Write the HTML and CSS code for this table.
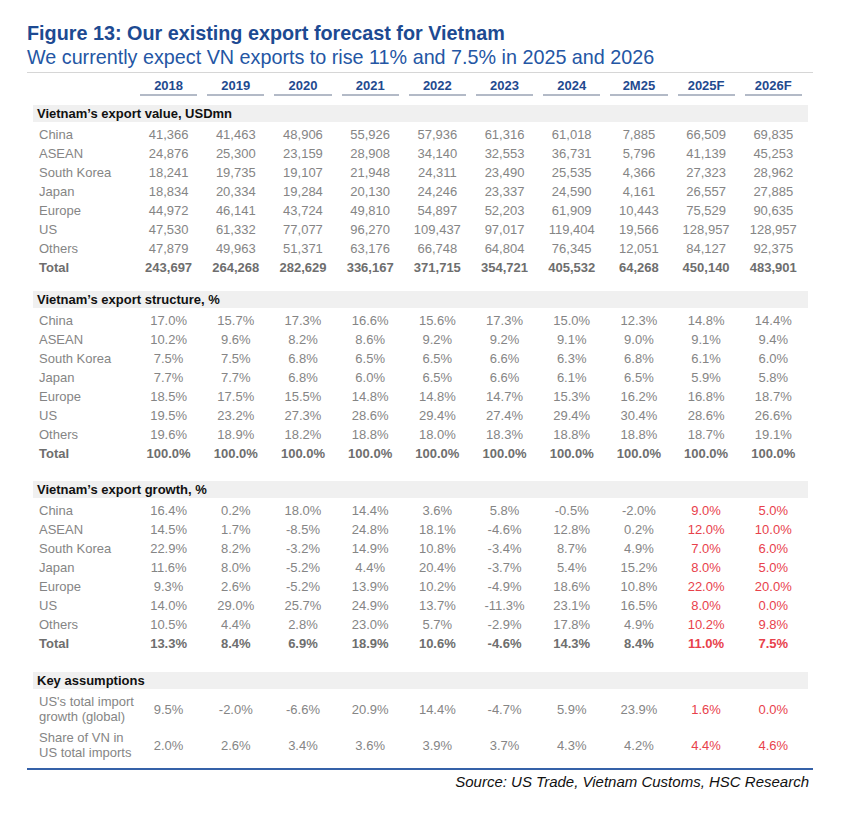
FILE: index.html
```html
<!DOCTYPE html>
<html>
<head>
<meta charset="utf-8">
<title>Figure 13</title>
<link rel="stylesheet" href="styles.css">
</head>
<body>
<div class="figure">
  <h1 class="title">Figure 13: Our existing export forecast for Vietnam</h1>
  <p class="subtitle">We currently expect VN exports to rise 11% and 7.5% in 2025 and 2026</p>
  <div class="rule"></div>
  <div class="table">
    <div class="row head">
      <div></div>
      <div class="yr"><span>2018</span></div>
      <div class="yr"><span>2019</span></div>
      <div class="yr"><span>2020</span></div>
      <div class="yr"><span>2021</span></div>
      <div class="yr"><span>2022</span></div>
      <div class="yr"><span>2023</span></div>
      <div class="yr"><span>2024</span></div>
      <div class="yr"><span>2M25</span></div>
      <div class="yr"><span>2025F</span></div>
      <div class="yr"><span>2026F</span></div>
    </div>

    <div class="section s1">
      <div class="band">Vietnam’s export value, USDmn</div>
      <div class="row"><div class="lbl">China</div><div>41,366</div><div>41,463</div><div>48,906</div><div>55,926</div><div>57,936</div><div>61,316</div><div>61,018</div><div>7,885</div><div>66,509</div><div>69,835</div></div>
      <div class="row"><div class="lbl">ASEAN</div><div>24,876</div><div>25,300</div><div>23,159</div><div>28,908</div><div>34,140</div><div>32,553</div><div>36,731</div><div>5,796</div><div>41,139</div><div>45,253</div></div>
      <div class="row"><div class="lbl">South Korea</div><div>18,241</div><div>19,735</div><div>19,107</div><div>21,948</div><div>24,311</div><div>23,490</div><div>25,535</div><div>4,366</div><div>27,323</div><div>28,962</div></div>
      <div class="row"><div class="lbl">Japan</div><div>18,834</div><div>20,334</div><div>19,284</div><div>20,130</div><div>24,246</div><div>23,337</div><div>24,590</div><div>4,161</div><div>26,557</div><div>27,885</div></div>
      <div class="row"><div class="lbl">Europe</div><div>44,972</div><div>46,141</div><div>43,724</div><div>49,810</div><div>54,897</div><div>52,203</div><div>61,909</div><div>10,443</div><div>75,529</div><div>90,635</div></div>
      <div class="row"><div class="lbl">US</div><div>47,530</div><div>61,332</div><div>77,077</div><div>96,270</div><div>109,437</div><div>97,017</div><div>119,404</div><div>19,566</div><div>128,957</div><div>128,957</div></div>
      <div class="row"><div class="lbl">Others</div><div>47,879</div><div>49,963</div><div>51,371</div><div>63,176</div><div>66,748</div><div>64,804</div><div>76,345</div><div>12,051</div><div>84,127</div><div>92,375</div></div>
      <div class="row total"><div class="lbl">Total</div><div>243,697</div><div>264,268</div><div>282,629</div><div>336,167</div><div>371,715</div><div>354,721</div><div>405,532</div><div>64,268</div><div>450,140</div><div>483,901</div></div>
    </div>

    <div class="section s2">
      <div class="band">Vietnam’s export structure, %</div>
      <div class="row"><div class="lbl">China</div><div>17.0%</div><div>15.7%</div><div>17.3%</div><div>16.6%</div><div>15.6%</div><div>17.3%</div><div>15.0%</div><div>12.3%</div><div>14.8%</div><div>14.4%</div></div>
      <div class="row"><div class="lbl">ASEAN</div><div>10.2%</div><div>9.6%</div><div>8.2%</div><div>8.6%</div><div>9.2%</div><div>9.2%</div><div>9.1%</div><div>9.0%</div><div>9.1%</div><div>9.4%</div></div>
      <div class="row"><div class="lbl">South Korea</div><div>7.5%</div><div>7.5%</div><div>6.8%</div><div>6.5%</div><div>6.5%</div><div>6.6%</div><div>6.3%</div><div>6.8%</div><div>6.1%</div><div>6.0%</div></div>
      <div class="row"><div class="lbl">Japan</div><div>7.7%</div><div>7.7%</div><div>6.8%</div><div>6.0%</div><div>6.5%</div><div>6.6%</div><div>6.1%</div><div>6.5%</div><div>5.9%</div><div>5.8%</div></div>
      <div class="row"><div class="lbl">Europe</div><div>18.5%</div><div>17.5%</div><div>15.5%</div><div>14.8%</div><div>14.8%</div><div>14.7%</div><div>15.3%</div><div>16.2%</div><div>16.8%</div><div>18.7%</div></div>
      <div class="row"><div class="lbl">US</div><div>19.5%</div><div>23.2%</div><div>27.3%</div><div>28.6%</div><div>29.4%</div><div>27.4%</div><div>29.4%</div><div>30.4%</div><div>28.6%</div><div>26.6%</div></div>
      <div class="row"><div class="lbl">Others</div><div>19.6%</div><div>18.9%</div><div>18.2%</div><div>18.8%</div><div>18.0%</div><div>18.3%</div><div>18.8%</div><div>18.8%</div><div>18.7%</div><div>19.1%</div></div>
      <div class="row total"><div class="lbl">Total</div><div>100.0%</div><div>100.0%</div><div>100.0%</div><div>100.0%</div><div>100.0%</div><div>100.0%</div><div>100.0%</div><div>100.0%</div><div>100.0%</div><div>100.0%</div></div>
    </div>

    <div class="section s3">
      <div class="band">Vietnam’s export growth, %</div>
      <div class="row"><div class="lbl">China</div><div>16.4%</div><div>0.2%</div><div>18.0%</div><div>14.4%</div><div>3.6%</div><div>5.8%</div><div>-0.5%</div><div>-2.0%</div><div class="red">9.0%</div><div class="red">5.0%</div></div>
      <div class="row"><div class="lbl">ASEAN</div><div>14.5%</div><div>1.7%</div><div>-8.5%</div><div>24.8%</div><div>18.1%</div><div>-4.6%</div><div>12.8%</div><div>0.2%</div><div class="red">12.0%</div><div class="red">10.0%</div></div>
      <div class="row"><div class="lbl">South Korea</div><div>22.9%</div><div>8.2%</div><div>-3.2%</div><div>14.9%</div><div>10.8%</div><div>-3.4%</div><div>8.7%</div><div>4.9%</div><div class="red">7.0%</div><div class="red">6.0%</div></div>
      <div class="row"><div class="lbl">Japan</div><div>11.6%</div><div>8.0%</div><div>-5.2%</div><div>4.4%</div><div>20.4%</div><div>-3.7%</div><div>5.4%</div><div>15.2%</div><div class="red">8.0%</div><div class="red">5.0%</div></div>
      <div class="row"><div class="lbl">Europe</div><div>9.3%</div><div>2.6%</div><div>-5.2%</div><div>13.9%</div><div>10.2%</div><div>-4.9%</div><div>18.6%</div><div>10.8%</div><div class="red">22.0%</div><div class="red">20.0%</div></div>
      <div class="row"><div class="lbl">US</div><div>14.0%</div><div>29.0%</div><div>25.7%</div><div>24.9%</div><div>13.7%</div><div>-11.3%</div><div>23.1%</div><div>16.5%</div><div class="red">8.0%</div><div class="red">0.0%</div></div>
      <div class="row"><div class="lbl">Others</div><div>10.5%</div><div>4.4%</div><div>2.8%</div><div>23.0%</div><div>5.7%</div><div>-2.9%</div><div>17.8%</div><div>4.9%</div><div class="red">10.2%</div><div class="red">9.8%</div></div>
      <div class="row total"><div class="lbl">Total</div><div>13.3%</div><div>8.4%</div><div>6.9%</div><div>18.9%</div><div>10.6%</div><div>-4.6%</div><div>14.3%</div><div>8.4%</div><div class="red">11.0%</div><div class="red">7.5%</div></div>
    </div>

    <div class="section s4">
      <div class="band">Key assumptions</div>
      <div class="row key"><div class="lbl">US's total import growth (global)</div><div>9.5%</div><div>-2.0%</div><div>-6.6%</div><div>20.9%</div><div>14.4%</div><div>-4.7%</div><div>5.9%</div><div>23.9%</div><div class="red">1.6%</div><div class="red">0.0%</div></div>
      <div class="row key"><div class="lbl">Share of VN in US total imports</div><div>2.0%</div><div>2.6%</div><div>3.4%</div><div>3.6%</div><div>3.9%</div><div>3.7%</div><div>4.3%</div><div>4.2%</div><div class="red">4.4%</div><div class="red">4.6%</div></div>
    </div>
  </div>
  <div class="bottom-rule"></div>
  <p class="source">Source: US Trade, Vietnam Customs, HSC Research</p>
</div>
</body>
</html>
```

FILE: styles.css
```css
body {
  margin: 0;
  background: #ffffff;
  font-family: "Liberation Sans", Arial, sans-serif;
}

.figure {
  margin-left: 27px;
  width: 786px;
}

.title {
  margin: 21px 0 0;
  font-size: 19.8px;
  line-height: 24px;
  font-weight: bold;
  color: #1d4a92;
}

.subtitle {
  margin: 0;
  font-size: 19.75px;
  line-height: 24px;
  font-weight: normal;
  color: #2456a4;
}

.rule {
  margin-top: 3px;
  height: 1px;
  background: #d6d6d6;
}

.table {
  margin-left: 6px;
  width: 775px;
}

.row {
  display: grid;
  grid-template-columns: 102px repeat(10, 67.2px);
  font-size: 13px;
  line-height: 19px;
  color: #858585;
  text-align: center;
  white-space: nowrap;
}

.row .lbl {
  text-align: left;
  padding-left: 6px;
}

.head {
  margin-top: 5px;
  line-height: 16px;
}

.yr span {
  display: block;
  margin: 0 5px;
  border-bottom: 2px solid #b3bac7;
  font-weight: bold;
  color: #1f4a8f;
}

.band {
  height: 17px;
  line-height: 17px;
  background: #f0f0f0;
  font-size: 13px;
  font-weight: bold;
  color: #111111;
  padding-left: 4px;
  margin-bottom: 3px;
}

.s1 { margin-top: 9px; }
.s2 { margin-top: 14px; }
.s3 { margin-top: 18px; }
.s4 { margin-top: 19px; }

.s4 .band {
  margin-bottom: 2px;
}

.total {
  font-weight: bold;
  color: #6e6e6e;
}

.red {
  color: #e8414b;
}

.key {
  line-height: 15px;
  padding: 3px 0;
  align-items: center;
}

.key .lbl {
  white-space: normal;
}

.bottom-rule {
  margin-top: 5px;
  height: 2px;
  background: #3561a8;
}

.source {
  margin: 3px 0 0;
  padding-right: 4px;
  text-align: right;
  font-size: 15px;
  line-height: 18px;
  font-style: italic;
  color: #111111;
}
```
